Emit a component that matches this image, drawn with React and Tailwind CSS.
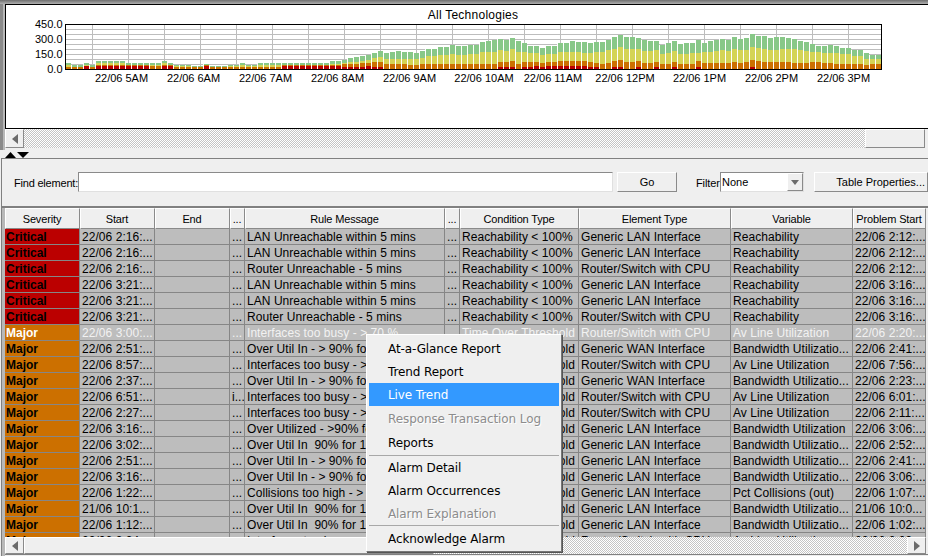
import React from 'react';

const totals = [
  6,4,4,6,4,8,8,8,8,8,6,6,6,6,6,6,8,6,4,4,4,3,3,5,3,3,3,4,4,6,4,4,6,6,6,6,6,6,6,6,6,6,6,6,
  8,8,9,11,12,13,14,16,18,16,17,18,17,17,16,18,20,20,22,22,24,23,
  23,24,24,27,28,29,30,29,31,28,26,23,23,21,23,23,26,26,28,27,27,26,27,27,29,32,34,32,32,31,
  29,28,28,24,26,28,25,26,26,29,26,28,29,30,29,32,30,31,35,33,33,31,32,32,31,30,28,27,25,23,
  23,24,23,21,21,19,19,16,14,14,
];
const yellows = [
  4,2,2,4,2,6,6,6,6,6,4,4,4,4,4,4,6,4,3,3,3,2,2,4,2,2,2,3,3,4,3,3,4,4,4,4,4,4,4,4,4,4,4,4,
  5,5,6,7,7,8,9,11,12,10,10,10,10,10,10,11,13,13,14,14,15,14,
  14,15,15,17,17,17,19,18,20,17,17,16,16,14,15,15,17,17,17,17,16,16,17,17,19,20,22,20,20,20,
  18,18,19,15,16,18,15,15,16,16,17,17,18,19,18,20,19,19,22,21,20,19,19,20,20,20,19,18,17,17,
  16,16,16,15,15,13,13,10,10,10,
];
const oranges = [
  2,2,2,3,2,4,4,4,4,4,4,4,4,4,3,3,4,4,2,2,2,2,2,4,2,2,2,2,2,2,2,2,2,2,2,2,4,4,4,4,4,4,4,4,
  4,4,5,5,5,6,6,7,7,5,5,5,5,4,4,5,5,5,5,5,5,5,
  5,5,5,5,5,5,7,7,8,5,7,7,7,6,7,7,8,8,8,8,8,7,6,5,6,8,9,7,7,8,
  6,6,7,5,5,7,5,5,5,8,6,6,6,6,6,7,6,7,9,8,7,7,7,7,7,6,6,6,7,7,
  6,6,5,5,5,5,5,4,5,5,
];
const reds = [
  0,0,0,3,0,3,3,3,3,3,3,3,3,3,0,0,3,3,0,0,0,0,0,3,0,0,0,0,0,0,0,0,0,0,0,0,3,3,3,3,3,3,3,3,
  3,3,2,2,2,2,3,2,2,0,0,0,0,0,0,0,0,0,0,0,0,0,
  0,0,0,0,0,0,2,2,2,0,2,2,3,2,3,3,3,3,3,3,3,2,2,0,0,2,2,0,0,2,
  0,0,2,0,0,2,0,0,0,2,0,0,0,0,0,0,0,0,2,0,0,0,0,0,0,0,0,0,0,0,
  0,0,0,0,0,0,0,0,0,0,
];

const hLines = [29, 34, 39, 44, 49, 54, 59, 64];
const vLines = [92, 128, 164, 200, 236, 272, 308, 344, 380, 416, 452, 488, 524, 560, 596, 632, 668, 704, 740, 776, 812, 848];
const xLabels = [
  ['22/06 5AM', 121.5], ['22/06 6AM', 193.5], ['22/06 7AM', 265.5], ['22/06 8AM', 337.5], ['22/06 9AM', 409.5], ['22/06 10AM', 484],
  ['22/06 11AM', 553], ['22/06 12PM', 625], ['22/06 1PM', 699.5], ['22/06 2PM', 771.5], ['22/06 3PM', 843.5],
];
const yLabels = [['450.0', 28], ['300.0', 43], ['150.0', 58], ['0.0', 73]];

const Chart = () => (
  <svg width="922" height="123" viewBox="6 5 922 123" className="block" style={{ fontFamily: '"Liberation Sans", sans-serif' }}>
    {hLines.map((y) => <rect key={y} x="65" y={y} width="816" height="1" fill="#bdbdbd" shapeRendering="crispEdges" />)}
    {vLines.map((x) => <rect key={x} x={x} y="24" width="1" height="45" fill="#bdbdbd" shapeRendering="crispEdges" />)}
    {totals.map((t, i) => {
      const x = 66 + i * 6;
      return (
        <g key={i} shapeRendering="crispEdges">
          <rect x={x - 1} y={69 - t} width="1" height={t} fill="#ffffff" />
          <rect x={x} y={69 - t} width="5" height={t} fill="#88c888" />
          <rect x={x} y={69 - yellows[i]} width="5" height={yellows[i]} fill="#d4d455" />
          <rect x={x} y={69 - oranges[i]} width="5" height={oranges[i]} fill="#cc7000" />
          {reds[i] > 0 && <rect x={x} y={69 - reds[i]} width="5" height={reds[i]} fill="#bb0000" />}
        </g>
      );
    })}
    <rect x="65.5" y="24.5" width="816" height="45" fill="none" stroke="#000" shapeRendering="crispEdges" />
    <text x="473" y="19" textAnchor="middle" fontSize="12" letterSpacing="0.25" fill="#000">All Technologies</text>
    {yLabels.map(([t, y]) => <text key={t} x="62.5" y={y} textAnchor="end" fontSize="11" fill="#000">{t}</text>)}
    {xLabels.map(([t, x]) => <text key={t} x={x} y="82" textAnchor="middle" fontSize="11" fill="#000">{t}</text>)}
  </svg>
);

const bevel = 'bg-[#efefef] border border-t-white border-l-white border-r-[#8a8a8a] border-b-[#8a8a8a]';
const checker = 'bg-[repeating-conic-gradient(#ffffff_0_25%,#c4c4c4_0_50%)] bg-[length:2px_2px]';

const ArrowButton = ({ dir }) => (
  <div className={`w-[19px] h-full flex items-center justify-center shrink-0 ${bevel}`}>
    <svg width="6" height="10" viewBox="0 0 6 10">
      <path d={dir === 'left' ? 'M6 0V10L0 5Z' : 'M0 0V10L6 5Z'} fill="#6b6b6b" />
    </svg>
  </div>
);

const critical = (start, rule, element, problem) => ({
  sev: 'Critical', start, rule, cond: 'Reachability < 100%', element, variable: 'Reachability', problem,
});
const major = (start, rule, element, variable, problem, extra) => ({
  sev: 'Major', start, rule, cond: 'Time Over Threshold', element, variable, problem, ...extra,
});

const LAN = 'Generic LAN Interface';
const WAN = 'Generic WAN Interface';
const ROUTER = 'Router/Switch with CPU';
const BW = 'Bandwidth Utilizatio...';
const AV = 'Av Line Utilization';
const BUSY = 'Interfaces too busy - > 70 %';
const OVER = 'Over Util In - > 90% for 10 mins';
const OVER2 = 'Over Util In  90% for 10 mins';

const rows = [
  critical('22/06 2:16:...', 'LAN Unreachable within 5 mins', LAN, '22/06 2:12:...'),
  critical('22/06 2:16:...', 'LAN Unreachable within 5 mins', LAN, '22/06 2:12:...'),
  critical('22/06 2:16:...', 'Router Unreachable - 5 mins', ROUTER, '22/06 2:12:...'),
  critical('22/06 3:21:...', 'LAN Unreachable within 5 mins', LAN, '22/06 3:16:...'),
  critical('22/06 3:21:...', 'LAN Unreachable within 5 mins', LAN, '22/06 3:16:...'),
  critical('22/06 3:21:...', 'Router Unreachable - 5 mins', ROUTER, '22/06 3:16:...'),
  major('22/06 3:00:...', BUSY, ROUTER, AV, '22/06 2:20:...', { selected: true }),
  major('22/06 2:51:...', OVER, WAN, BW, '22/06 2:41:...'),
  major('22/06 8:57:...', BUSY, ROUTER, AV, '22/06 7:56:...'),
  major('22/06 2:37:...', OVER, WAN, BW, '22/06 2:23:...'),
  major('22/06 6:51:...', BUSY, ROUTER, AV, '22/06 6:01:...', { mark: 'i...' }),
  major('22/06 2:27:...', BUSY, ROUTER, AV, '22/06 2:11:...'),
  major('22/06 3:16:...', 'Over Utilized - >90% for 10 mins', LAN, 'Bandwidth Utilization', '22/06 3:06:...'),
  major('22/06 3:02:...', OVER2, LAN, BW, '22/06 2:52:...'),
  major('22/06 2:51:...', OVER, LAN, BW, '22/06 2:41:...'),
  major('22/06 3:16:...', OVER, LAN, BW, '22/06 3:06:...'),
  major('22/06 1:22:...', 'Collisions too high - > 20 %', LAN, 'Pct Collisions (out)', '22/06 1:07:...'),
  major('21/06 10:1...', OVER2, LAN, BW, '21/06 10:0...'),
  major('22/06 1:12:...', OVER2, LAN, BW, '22/06 1:02:...'),
  major('22/06 2:24:...', BUSY, ROUTER, AV, '22/06 2:09:...'),
];

const headers = ['Severity', 'Start', 'End', '...', 'Rule Message', '...', 'Condition Type', 'Element Type', 'Variable', 'Problem Start'];
const gridCols = 'grid grid-cols-[75px_75px_75px_15px_200px_15px_119px_152px_122px_73px]';
const cell = 'h-4 px-[2px] border-r border-b border-[#868686] bg-[#bdbdbd] overflow-hidden whitespace-pre leading-4 tracking-[0.05px]';

const Row = ({ row }) => {
  const tone = row.selected ? 'text-[#f2f2f2]' : 'text-black';
  const values = [row.start, '', row.mark || '...', row.rule, '...', row.cond, row.element, row.variable, row.problem];
  return (
    <div className={gridCols}>
      <div className={`h-4 pl-px border-r border-b border-[#868686] font-bold leading-4 ${row.sev === 'Critical' ? 'bg-[#bb0000]' : 'bg-[#cc7000]'} ${row.selected ? 'text-white' : 'text-black'}`}>
        {row.sev}
      </div>
      {values.map((v, i) => <div key={i} className={`${cell} ${tone}`}>{v}</div>)}
    </div>
  );
};

const menuItems = [
  { label: 'At-a-Glance Report', h: 'h-[23px]' },
  { label: 'Trend Report', h: 'h-[23px]' },
  { label: 'Live Trend', h: 'h-[23px]', active: true },
  { label: 'Response Transaction Log', h: 'h-[25px]', disabled: true },
  { label: 'Reports', h: 'h-6', line: true },
  { label: 'Alarm Detail', h: 'h-[23px]' },
  { label: 'Alarm Occurrences', h: 'h-[23px]' },
  { label: 'Alarm Explanation', h: 'h-[23px]', disabled: true, line: true },
  { label: 'Acknowledge Alarm', h: 'h-[25px]' },
];

const ContextMenu = () => (
  <div className="absolute left-[366px] top-[334px] w-[196px] h-[218px] p-[2px] bg-[#efefef] border border-t-white border-l-white border-r-[#777] border-b-[#777] shadow-[1px_1px_0_#555] font-['DejaVu_Sans',sans-serif] text-[12px] tracking-[-0.1px] text-black">
    {menuItems.map((item) => (
      <React.Fragment key={item.label}>
        <div className={`${item.h} pl-[19px] flex items-center ${item.active ? 'bg-[#3399ff] text-white' : ''} ${item.disabled ? 'text-[#8c8c8c] [text-shadow:1px_1px_0_#ffffff]' : ''}`}>
          {item.label}
        </div>
        {item.line && <div className="h-px bg-[#a8a8a8]" />}
      </React.Fragment>
    ))}
  </div>
);

export default function App() {
  return (
    <div className="relative w-[928px] h-[556px] overflow-hidden bg-[#efefef] font-['Liberation_Sans',Arial,sans-serif] text-[12px] text-black">
      {/* top split pane with the chart */}
      <div className="h-[150px] pt-1 pl-[5px] bg-[linear-gradient(to_bottom,#6e6e6e,#b0b0b0_4px,#efefef_4px)]">
        <div className="h-[146px] -ml-[5px] pl-[5px] bg-[linear-gradient(to_right,#8a8a8a_3px,#b8b8b8_3px,#b8b8b8_5px,transparent_5px)]">
          <div className="h-[125px] border border-r-0 border-black bg-white">
            <Chart />
          </div>
          <div className="flex h-[19px]">
            <ArrowButton dir="left" />
            <div className={`flex-1 ${checker}`} />
            <div className={`w-[60px] ${bevel}`} />
            <div className="w-[3px] bg-[#efefef]" />
          </div>
        </div>
      </div>

      {/* divider arrows */}
      <div className="flex h-2 items-end pl-[5px]">
        <svg width="24" height="6" viewBox="0 0 24 6" className="block">
          <path d="M0 6L5.5 0L11 6Z" fill="#000" />
          <path d="M12 0H24L18 6Z" fill="#000" />
        </svg>
      </div>

      {/* find bar and table */}
      <div className="ml-px h-[398px] border-t border-l border-[#808080] flex flex-col">
        <div className="flex h-[49px] shrink-0 items-start pt-[13px] border-b-2 border-[#808080]">
          <span className="ml-[12px] w-[64px] h-5 leading-[22px] text-[11px] tracking-[-0.2px] whitespace-nowrap">Find element:</span>
          <div className="w-[535px] h-5 bg-white border border-t-[#8a8a8a] border-l-[#8a8a8a] border-r-[#e0e0e0] border-b-[#e0e0e0]" />
          <button className={`ml-1 w-[60px] h-5 pt-px text-[11px] leading-none ${bevel}`}>Go</button>
          <span className="ml-[19px] w-[24px] h-5 leading-[22px] text-[11px] tracking-[-0.1px]">Filter</span>
          <div className="w-[84px] h-5 bg-white border border-t-[#8a8a8a] border-l-[#8a8a8a] border-r-[#e0e0e0] border-b-[#e0e0e0] flex justify-between items-center text-[11px] pl-px">
            <span className="pt-px">None</span>
            <div className={`w-4 h-[18px] flex items-center justify-center ${bevel}`}>
              <svg width="8" height="5" viewBox="0 0 8 5"><path d="M0 0H8L4 5Z" fill="#6b6b6b" /></svg>
            </div>
          </div>
          <button className={`ml-[10px] w-[114px] h-5 pt-px text-[11px] leading-none whitespace-nowrap text-right pr-[2px] ${bevel}`}>Table Properties...</button>
        </div>

        <div className="pl-[3px] flex-1 flex flex-col min-h-0 bg-[linear-gradient(to_right,#b8b8b8_3px,transparent_3px)]">
          <div className="h-[329px] overflow-hidden">
            <div className={`${gridCols} h-[21px]`}>
              {headers.map((h, i) => (
                <div key={i} className={`flex items-center justify-center pt-px pr-px overflow-hidden whitespace-nowrap text-[11px] tracking-[-0.15px] ${bevel}`}>{h}</div>
              ))}
            </div>
            {rows.map((row, i) => <Row key={i} row={row} />)}
          </div>
          <div className="flex h-[17px] pr-[2px]">
            <ArrowButton dir="left" />
            <div className={`w-[409px] ${bevel}`} />
            <div className={`flex-1 ${checker}`} />
            <ArrowButton dir="right" />
          </div>
          <div className="h-px bg-[#808080]" />
        </div>
      </div>

      <ContextMenu />
    </div>
  );
}
